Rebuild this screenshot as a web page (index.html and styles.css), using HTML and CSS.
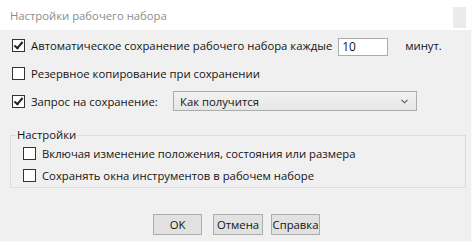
FILE: index.html
```html
<!DOCTYPE html>
<html>
<head>
    <link rel="stylesheet" href="styles.css">
</head>
<body>
    <div class="dialog">
        <div class="titlebar">
            <span class="title">Настройки рабочего набора</span>
            <span class="close-btn"></span>
        </div>
        <div class="content">
            <div class="row">
                <span class="check checked"></span>
                <span class="label">Автоматическое сохранение рабочего набора каждые</span>
                <span class="textbox">10</span>
                <span class="unit">минут.</span>
            </div>
            <div class="row">
                <span class="check"></span>
                <span class="label">Резервное копирование при сохранении</span>
            </div>
            <div class="row">
                <span class="check checked"></span>
                <span class="label prompt-label">Запрос на сохранение:</span>
                <span class="combo">
                    <span>Как получится</span>
                    <svg class="chevron" width="7" height="5" viewBox="0 0 7 5">
                        <path d="M0.5 0.8 L3.5 3.8 L6.5 0.8" fill="none" stroke="#555" stroke-width="1.1"/>
                    </svg>
                </span>
            </div>

            <fieldset class="group">
                <legend>Настройки</legend>
                <div class="group-row">
                    <span class="check"></span>
                    <span class="label">Включая изменение положения, состояния или размера</span>
                </div>
                <div class="group-row">
                    <span class="check"></span>
                    <span class="label">Сохранять окна инструментов в рабочем наборе</span>
                </div>
            </fieldset>

            <div class="buttons">
                <button class="btn">OK</button>
                <button class="btn cancel-btn">Отмена</button>
                <button class="btn help-btn">Справка</button>
            </div>
        </div>
    </div>
</body>
</html>
```

FILE: styles.css
```css
body {
    margin: 0;
    background: #ffffff;
    font-family: "Open Sans", "Noto Sans", Arial, sans-serif;
    font-size: 11.3px;
    color: #141414;
}

.dialog {
    width: 471px;
    border-right: 1px solid #fafafa;
    border-bottom: 1px solid #fafafa;
}

.titlebar {
    height: 30px;
    background: #ffffff;
    display: flex;
    align-items: center;
    justify-content: space-between;
    padding: 0 5px 0 10px;
}

.title {
    color: #8c8c8c;
    margin-top: 1px;
}

.close-btn {
    width: 13px;
    height: 21px;
    background: #ebebeb;
    margin-top: 5px;
}

.content {
    background: #f0f0f0;
    height: 211px;
    padding: 1px 0 0 12px;
    box-sizing: border-box;
}

.row {
    height: 28px;
    display: flex;
    align-items: center;
}

.check {
    width: 11px;
    height: 11px;
    border: 1px solid #333333;
    background: #ffffff;
    position: relative;
    flex: none;
    margin-right: 6px;
}

.check.checked::after {
    content: "";
    position: absolute;
    left: 3px;
    top: 0px;
    width: 3px;
    height: 7px;
    border-right: 2px solid #222;
    border-bottom: 2px solid #222;
    transform: rotate(40deg);
}

.textbox {
    width: 45px;
    height: 16px;
    border: 1px solid #acacac;
    background: #ffffff;
    margin-left: 6px;
    padding-left: 3px;
    line-height: 16px;
    font-size: 12px;
    margin-top: 3px;
}

.unit {
    margin-left: 17px;
}

.prompt-label {
    width: 142px;
}

.combo {
    width: 244px;
    height: 20px;
    box-sizing: border-box;
    border: 1px solid #acacac;
    background: linear-gradient(#f2f2f2, #e6e6e6);
    display: flex;
    align-items: center;
    justify-content: space-between;
    padding: 0 8px 0 6px;
}

.group {
    margin: 13px 0 0 -2px;
    width: 456px;
    box-sizing: border-box;
    border: 1px solid #dcdcdc;
    padding: 0 0 1px 12px;
}

.group legend {
    padding: 0 1px;
    margin-left: -7px;
    line-height: 14px;
}

.group-row {
    height: 22px;
    display: flex;
    align-items: center;
}

.buttons {
    display: flex;
    justify-content: center;
    margin-top: 26px;
    padding-right: 10px;
}

.btn {
    width: 49px;
    height: 21px;
    border: 1px solid #adadad;
    background: #e1e1e1;
    font-family: inherit;
    font-size: 11.3px;
    color: #141414;
    padding: 0;
}

.cancel-btn {
    width: 50px;
    margin-left: 11px;
}

.help-btn {
    margin-left: 8px;
}
```
